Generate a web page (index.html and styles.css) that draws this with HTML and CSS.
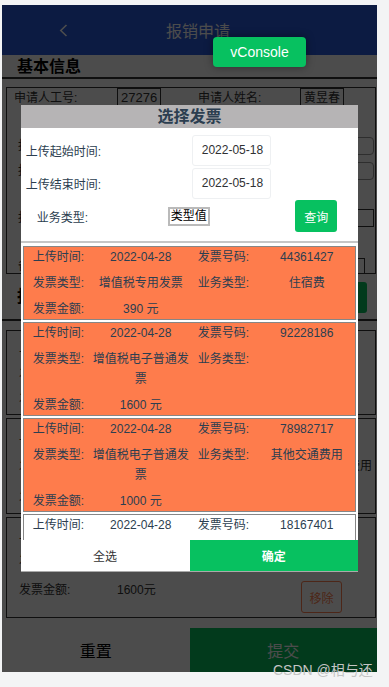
FILE: index.html
```html
<!DOCTYPE html>
<html lang="zh-CN">
<head>
  <meta charset="UTF-8" />
  <meta name="viewport" content="width=device-width, initial-scale=1.0" />
  <title>报销申请</title>
  <link rel="stylesheet" href="styles.css">
</head>
<body>
  <div class="phone">
    <div class="page">
      <!-- Top nav -->
      <div class="nav">
        <span class="nav-back">
          <svg width="9" height="13" viewBox="0 0 9 13"><path d="M7.5 1 L1.8 6.5 L7.5 12" fill="none" stroke="#fff" stroke-width="1.6"/></svg>
        </span>
        <span class="nav-title">报销申请</span>
      </div>

      <div class="content">
        <h2 class="sec-title line">基本信息</h2>
        <div class="form-box">
          <div class="form-row first">
            <span class="f-label">申请人工号:</span><span class="f-value">27276</span>
            <span class="f-label">申请人姓名:</span><span class="f-value cn">黄昱春</span>
          </div>
          <div class="form-row gap-l">
            <span class="f-label in">报销部门:</span><span class="f-input round"></span>
          </div>
          <div class="form-row gap-s">
            <span class="f-label in">报销日期:</span><span class="f-input round"></span>
          </div>
          <div class="form-row gap-l">
            <span class="f-label in">报销事由:</span><span class="f-input"></span>
          </div>
          <div class="form-row gap-l last">
            <span class="f-label in">备注:</span><span class="f-input short"></span>
          </div>
        </div>

        <div class="sec-bar">
          <h2 class="sec-title">报销明细</h2>
          <button class="add-btn">添加</button>
        </div>

        <div class="cards">
          <div class="card">
            <div class="c-row"><span>上传时间:</span><span>2022-04-28</span><span>发票号码:</span><span>44361427</span></div>
            <div class="c-row"><span>发票类型:</span><span>增值税专用发票</span><span>业务类型:</span><span>住宿费</span></div>
            <div class="c-row"><span>发票金额:</span><span>390元</span></div>
          </div>
          <div class="card">
            <div class="c-row"><span>上传时间:</span><span>2022-04-28</span><span>发票号码:</span><span>78982717</span></div>
            <div class="c-row"><span>发票类型:</span><span>增值税电子普通发票</span><span>业务类型:</span><span>其他交通费用</span></div>
            <div class="c-row"><span>发票金额:</span><span>1000元</span></div>
          </div>
          <div class="card">
            <div class="c-row"><span>上传时间:</span><span>2022-04-28</span><span>发票号码:</span><span>92228186</span></div>
            <div class="c-row"><span>发票类型:</span><span>普通发票</span><span>业务类型:</span><span></span></div>
            <div class="c-row money"><span>发票金额:</span><span>1600元</span><button class="remove-btn">移除</button></div>
          </div>
        </div>
      </div>

      <div class="bottom-bar">
        <button class="btn-reset">重置</button>
        <button class="btn-submit">提交</button>
      </div>
    </div>

    <div class="mask"></div>

    <!-- Invoice picker dialog -->
    <div class="dialog">
      <div class="dialog-title">选择发票</div>
      <div class="search">
        <div class="s-row r1">
          <span class="s-label">上传起始时间:</span>
          <span class="date-box">2022-05-18</span>
        </div>
        <div class="s-row r2">
          <span class="s-label">上传结束时间:</span>
          <span class="date-box">2022-05-18</span>
        </div>
        <div class="s-row r3">
          <span class="s-label type">业务类型:</span>
          <span class="type-input">类型值</span>
          <button class="query-btn">查询</button>
        </div>
      </div>

      <div class="list">
        <div class="item picked">
          <span>上传时间:</span><span class="v">2022-04-28</span><span class="l2">发票号码:</span><span class="v">44361427</span>
          <span>发票类型:</span><span class="v">增值税专用发票</span><span class="l2">业务类型:</span><span class="v">住宿费</span>
          <span>发票金额:</span><span class="v">390 元</span>
        </div>
        <div class="item picked">
          <span>上传时间:</span><span class="v">2022-04-28</span><span class="l2">发票号码:</span><span class="v">92228186</span>
          <span>发票类型:</span><span class="v">增值税电子普通发票</span><span class="l2">业务类型:</span><span class="v"></span>
          <span>发票金额:</span><span class="v">1600 元</span>
        </div>
        <div class="item picked">
          <span>上传时间:</span><span class="v">2022-04-28</span><span class="l2">发票号码:</span><span class="v">78982717</span>
          <span>发票类型:</span><span class="v">增值税电子普通发票</span><span class="l2">业务类型:</span><span class="v">其他交通费用</span>
          <span>发票金额:</span><span class="v">1000 元</span>
        </div>
        <div class="item tail">
          <span>上传时间:</span><span class="v">2022-04-28</span><span class="l2">发票号码:</span><span class="v">18167401</span>
        </div>
      </div>

      <div class="dialog-foot">
        <button class="btn-all">全选</button>
        <button class="btn-ok">确定</button>
      </div>
    </div>
  </div>

  <div class="vconsole">vConsole</div>
  <div class="watermark">CSDN @相与还</div>
</body>
</html>
```

FILE: styles.css
```css
html, body {
  margin: 0;
  padding: 0;
  height: 100%;
  overflow: hidden;
  background: #f3f4f5;
  font-family: "Liberation Sans", "Noto Sans CJK SC", sans-serif;
  font-size: 12px;
  color: #333;
}
button {
  font-family: inherit;
  border: none;
  padding: 0;
  cursor: pointer;
}
.phone {
  position: relative;
  width: 375px;
  height: 667px;
  margin: 5px 0 0 2px;
  overflow: hidden;
  background: #fff;
}
.page {
  height: 100%;
  display: flex;
  flex-direction: column;
}

/* nav */
.nav {
  height: 50px;
  flex-shrink: 0;
  background: #285adc;
  display: grid;
  grid-template-columns: 90px 1fr 73px;
  align-items: center;
}
.nav-back {
  padding-left: 57px;
  display: flex;
}
.nav-title {
  text-align: center;
  color: #fff;
  font-size: 16px;
}

/* page content */
.content {
  flex: 1;
  overflow: hidden;
}
.sec-title {
  margin: 0;
  font-size: 16px;
  font-weight: bold;
  line-height: 22px;
  padding-left: 15px;
  color: #000;
}
.sec-title.line {
  border-bottom: 2px solid #333;
  padding-top: 1px;
  line-height: 21px;
}
.form-box {
  margin: 8px 1px 0 4px;
  border: 1px solid #333;
  padding-left: 7px;
}
.form-row {
  display: grid;
  grid-template-columns: 103px 81px 102px auto;
  align-items: center;
  height: 18px;
}
.form-row.first {
  height: 20px;
}
.form-row.gap-l { margin-top: 29px; }
.form-row.gap-s { margin-top: 7px; }
.form-row.last { margin-top: 30px; height: 16px; }
.f-label {
  line-height: 18px;
  color: #333;
}
.f-label.in {
  padding-left: 4px;
}
.f-value {
  justify-self: start;
  border: 1px solid #333;
  padding: 0 3px;
  line-height: 18px;
  font-size: 13px;
}
.f-value.cn {
  font-size: 12px;
}
.f-input {
  grid-column: 2 / 5;
  height: 18px;
  margin-right: 1px;
  border: 1px solid #333;
  box-sizing: border-box;
}
.f-input.round {
  border-radius: 4px;
  border-color: #999;
}
.f-input.short {
  height: 16px;
  margin-right: 10px;
}
.sec-bar {
  height: 45px;
  display: flex;
  align-items: center;
  justify-content: space-between;
  border-bottom: 2px solid #333;
  padding-right: 10px;
}
.add-btn {
  width: 60px;
  height: 31px;
  margin-top: 2px;
  border-radius: 3px;
  background: #07c160;
  color: #fff;
  font-size: 12px;
}
.cards {
  padding-top: 9px;
}
.card {
  margin: 0 1px 3px 4px;
  border: 1px solid #333;
  padding: 4px 0 4px 12px;
}
.c-row {
  display: grid;
  grid-template-columns: 98px 90px 93px 1fr;
  align-items: center;
  min-height: 25px;
  line-height: 18px;
}
.c-row.money {
  grid-template-columns: 98px 90px 1fr;
  align-items: start;
}
.c-row.money span {
  padding-top: 9px;
}
.remove-btn {
  justify-self: end;
  margin: 9px 33px 0 0;
  width: 41px;
  height: 32px;
  border: 1px solid #ff7f50;
  border-radius: 3px;
  background: #fff;
  color: #ff7f50;
  font-size: 12px;
}
.bottom-bar {
  height: 44px;
  flex-shrink: 0;
  display: grid;
  grid-template-columns: 1fr 1fr;
}
.btn-reset {
  background: #fff;
  color: #000;
  font-size: 16px;
}
.btn-submit {
  background: #07c160;
  color: #fff;
  font-size: 16px;
}

/* mask + dialog */
.mask {
  position: absolute;
  inset: 0;
  background: rgba(0, 0, 0, 0.7);
}
.dialog {
  position: absolute;
  left: 5%;
  top: 100px;
  width: 90%;
  height: 467px;
  background: #fff;
  display: flex;
  flex-direction: column;
  color: #2c3e50;
}
.dialog-title {
  height: 23px;
  line-height: 23px;
  background: #b6b4b5;
  text-align: center;
  font-size: 16px;
  font-weight: bold;
  flex-shrink: 0;
}
.search {
  padding-bottom: 9px;
  border-bottom: 2px solid #c6c6c6;
  flex-shrink: 0;
}
.s-row {
  display: flex;
  align-items: center;
}
.s-row.r1 { margin-top: 7px; }
.s-row.r2 { margin-top: 2px; }
.s-row.r3 { margin-top: 1px; }
.s-label {
  width: 166px;
  padding-left: 5px;
}
.s-label.type {
  width: 131px;
  padding-left: 16px;
}
.date-box {
  width: 79px;
  height: 31px;
  box-sizing: border-box;
  border: 1px solid #eef0f2;
  border-radius: 3px;
  line-height: 29px;
  padding-left: 9px;
  color: #303133;
}
.type-input {
  width: 42px;
  box-sizing: border-box;
  border: 2px solid #bababa;
  line-height: 15px;
  text-align: center;
  color: #000;
}
.query-btn {
  margin-left: auto;
  margin-right: 21px;
  width: 42px;
  height: 32px;
  border-radius: 3px;
  background: #07c160;
  color: #fff;
  font-size: 12px;
}
.list {
  flex: 1;
  overflow: hidden;
  padding: 3px 2px 0;
}
.item {
  display: grid;
  grid-template-columns: 60px 96px 70px 96px;
  row-gap: 6px;
  line-height: 20px;
  padding-left: 9px;
  border: 1px solid #868686;
  margin-bottom: 2px;
  background: #fff;
}
.item.picked {
  background: #fe7c4c;
}
.item.tail {
  padding-bottom: 40px;
}
.item .v {
  text-align: center;
}
.item .l2 {
  padding-left: 9px;
}
.dialog-foot {
  height: 32px;
  flex-shrink: 0;
  display: grid;
  grid-template-columns: 1fr 1fr;
  border-bottom: 1px solid #aaa;
  box-sizing: border-box;
}
.btn-all {
  background: #fff;
  color: #333;
  font-size: 12px;
}
.btn-ok {
  background: #07c160;
  color: #fff;
  font-size: 12px;
  font-weight: bold;
}

/* floating bits */
.vconsole {
  position: absolute;
  left: 213px;
  top: 37px;
  width: 93px;
  height: 30px;
  line-height: 30px;
  text-align: center;
  border-radius: 4px;
  background: #07c160;
  color: #fff;
  font-size: 14px;
  box-shadow: 0 0 8px rgba(0, 0, 0, 0.4);
}
.watermark {
  position: absolute;
  left: 273px;
  top: 661px;
  line-height: 18px;
  font-size: 14px;
  color: #c4c4c4;
  white-space: nowrap;
}
```
